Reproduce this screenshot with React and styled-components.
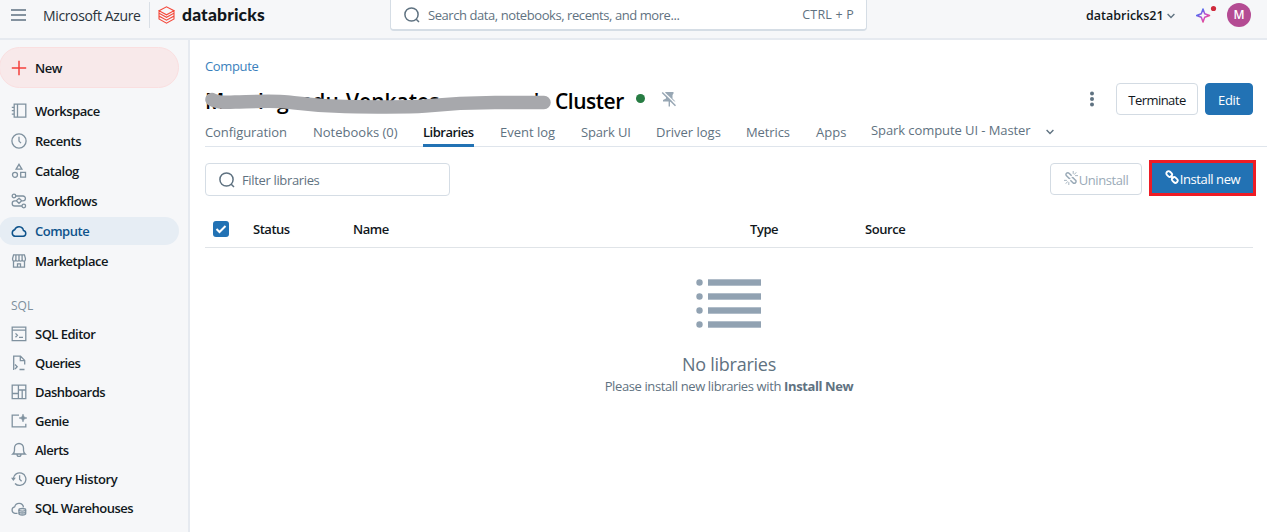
import React from 'react';
import styled, { createGlobalStyle, css } from 'styled-components';

const Global = createGlobalStyle`
  * { box-sizing: border-box; }
  body { margin: 0; background: #fff; overflow: hidden; }
`;

const c = {
  ink: '#11171c',
  muted: '#5f7281',
  icon: '#7f919f',
  line: '#dfe5ec',
  bar: '#f6f7f9',
  blue: '#2272b4',
};

const Page = styled.div`
  width: 1267px;
  height: 532px;
  display: flex;
  flex-direction: column;
  overflow: hidden;
  font-family: 'Open Sans', 'Noto Sans', sans-serif;
  font-size: 13px;
  line-height: 20px;
  color: ${c.ink};
  white-space: nowrap;
`;

const Text = styled.span`
  letter-spacing: ${(p) => p.$ls || 0}px;
`;

/* ---------- top bar ---------- */
const TopBar = styled.header`
  flex: none;
  height: 40px;
  padding-bottom: 8px;
  display: flex;
  align-items: center;
  background: ${c.bar};
  border-bottom: 2px solid #e6eaf0;
`;
const MenuButton = styled.div`
  width: 43px;
  padding-left: 11px;
  display: flex;
`;
const Azure = styled.div`
  width: 106px;
  padding-top: 1px;
  font-size: 14px;
  color: #2a333b;
`;
const Brand = styled.div`
  height: 26px;
  width: 241px;
  padding: 0 0 0 8px;
  border-left: 1px solid #d9dfe6;
  display: flex;
  align-items: center;
  gap: 7px;
  font-family: Lato, 'Open Sans', sans-serif;
  font-weight: 900;
  font-size: 17.5px;
`;
const GlobalSearch = styled.div`
  width: 477px;
  height: 34px;
  margin-top: -2px;
  padding: 2px 12px 0 13px;
  display: flex;
  align-items: center;
  background: #fff;
  border: 1px solid #d5dde5;
  border-bottom-width: 2px;
  border-radius: 4px;
  color: ${c.muted};
  svg { margin-right: 8px; }
  span:last-child { margin-left: auto; font-size: 12.5px; padding-top: 1px; }
`;
const Account = styled.div`
  width: 110px;
  margin-left: 219px;
  padding-top: 1px;
  display: flex;
  align-items: center;
  gap: 3px;
  font-weight: 600;
  font-size: 12.5px;
`;
const Avatar = styled.div`
  width: 24px;
  height: 24px;
  margin-left: 9px;
  border-radius: 50%;
  background: #b44b93;
  color: #fff;
  font-weight: 600;
  font-size: 12px;
  line-height: 24px;
  text-align: center;
`;

/* ---------- sidebar ---------- */
const Body = styled.div`
  flex: 1;
  min-height: 0;
  display: flex;
`;
const Sidebar = styled.nav`
  flex: none;
  width: 190px;
  padding-top: 7px;
  background: ${c.bar};
  border-right: 2px solid #e6eaf0;
  overflow: hidden;
`;
const NavItem = styled.div`
  display: flex;
  align-items: center;
  gap: 8px;
  width: 180px;
  height: ${(p) => p.$h || 30}px;
  margin-left: -1px;
  padding-left: 12px;
  font-weight: 600;
  color: ${c.ink};
  svg { color: ${c.icon}; flex: none; }
  ${(p) => p.$active && css`
    height: 28px;
    margin-top: 1px;
    margin-bottom: 1px;
    border-radius: 14px;
    background: #e6edf4;
    color: #0e538b;
    svg { color: #0e538b; }
  `}
  ${(p) => p.$primary && css`
    height: 41px;
    margin-bottom: 8px;
    border-radius: 21px;
    background: #f8e9ea;
    border: 1px solid #fadfe0;
    padding-left: 11px;
    svg { color: #f4403c; }
  `}
`;
const SectionLabel = styled.div`
  height: 44px;
  padding: 20px 0 0 11px;
  font-size: 12px;
  color: #7e909e;
`;

/* ---------- main ---------- */
const Main = styled.main`
  flex: 1;
  min-width: 0;
  padding-left: 15px;
  display: flex;
  flex-direction: column;
`;
const Crumb = styled.div`
  padding-top: 16px;
  height: 43px;
  color: #3a7fbc;
`;
const TitleRow = styled.div`
  height: 32px;
  padding-right: 14px;
  display: flex;
  align-items: center;
`;
const Title = styled.h1`
  position: relative;
  width: 419px;
  margin: 3px 13px 0 0;
  display: flex;
  font-size: 21px;
  line-height: 32px;
  font-weight: 600;
  color: #000;
`;
const Part = styled.span`
  width: ${(p) => p.$w}px;
  letter-spacing: ${(p) => p.$ls || 0}px;
`;
const Marker = styled.svg`
  position: absolute;
  left: 0;
  top: 7px;
`;
const Dot = styled.span`
  width: 9px;
  height: 9px;
  margin: 0 16px 1px -1px;
  border-radius: 50%;
  background: #277c43;
`;
const Kebab = styled.div`
  margin-left: auto;
  margin-right: 21px;
  display: flex;
`;
const ButtonPair = styled.div`
  display: flex;
  gap: 7px;
`;
const Button = styled.button`
  height: 32px;
  width: ${(p) => p.$w}px;
  padding: 2px 0 0;
  display: flex;
  align-items: center;
  justify-content: center;
  font: inherit;
  border-radius: 4px;
  border: 1px solid #d3dbe3;
  background: #fff;
  color: ${c.ink};
  ${(p) => p.$primary && css`
    background: ${c.blue};
    border-color: ${c.blue};
    color: #fff;
  `}
  ${(p) => p.$disabled && css`
    color: #9aaab7;
  `}
  ${(p) => p.$marked && css`
    height: 36px;
    padding-top: 2px;
    border: 3px solid #ee1c25;
    border-radius: 0;
  `}
  svg { margin: 0 1px 4px 0; }
`;
const Tabs = styled.div`
  height: 32px;
  padding-top: 7px;
  display: grid;
  grid-template-columns: 108px 110px 77px 81px 75px 90px 70px 55px 175px 20px;
  border-bottom: 1px solid ${c.line};
  color: ${c.muted};
  font-weight: 500;
`;
const Tab = styled.div`
  margin-top: ${(p) => (p.$raised ? -2 : 0)}px;
  height: 25px;
  justify-self: start;
  ${(p) => p.$active && css`
    color: ${c.ink};
    font-weight: 600;
    border-bottom: 3px solid ${c.blue};
  `}
`;
const Toolbar = styled.div`
  display: flex;
  height: 49px;
  padding: 13px 11px 0 0;
`;
const Filter = styled.div`
  width: 245px;
  height: 33px;
  margin: 3px auto 0 0;
  padding-left: 13px;
  display: flex;
  align-items: center;
  gap: 7px;
  border: 1px solid #d5dde5;
  border-radius: 4px;
  color: ${c.muted};
`;
const Actions = styled.div`
  display: flex;
  gap: 7px;
  button:first-child { margin-top: 3px; }
`;
const TableHead = styled.div`
  height: 52px;
  margin-right: 14px;
  padding: 15px 0 0 8px;
  display: grid;
  grid-template-columns: 40px 100px 397px 115px 1fr;
  align-items: center;
  border-bottom: 1px solid #e0e4e8;
  font-weight: 600;
  color: ${c.ink};
`;
const Check = styled.span`
  width: 16px;
  height: 16px;
  display: flex;
  align-items: center;
  justify-content: center;
  background: ${c.blue};
  border-radius: 3px;
`;
const Empty = styled.div`
  margin-right: 14px;
  padding-top: 31px;
  display: flex;
  flex-direction: column;
  align-items: center;
  color: ${c.muted};
`;
const EmptyTitle = styled.div`
  margin-top: 23px;
  font-size: 18px;
  line-height: 24px;
  font-weight: 500;
`;

/* ---------- icons ---------- */
const Icon = ({ children, size = 16, sw = 1.3, ...rest }) => (
  <svg width={size} height={size} viewBox="0 0 16 16" fill="none" stroke="currentColor" strokeWidth={sw} {...rest}>
    {children}
  </svg>
);
const icons = {
  plus: <path d="M8 .8v14.4M.8 8h14.4" strokeWidth="1.5" />,
  workspace: <path d="M3.2 1.2h11.6v13H3.2zM6.5 1.2v13M.8 4.3h2.4M.8 7.7h2.4M.8 11.1h2.4" />,
  recents: <><circle cx="8" cy="8" r="7.1" /><path d="M8 3.8v4.3l2 2" /></>,
  catalog: <><path d="M8 1.3l2.9 4.8H5.1z" /><circle cx="4" cy="11.8" r="2.5" /><path d="M9.7 9.4h4.8v4.8H9.7z" /></>,
  workflows: <><circle cx="3" cy="3" r="1.8" /><circle cx="12.8" cy="13" r="1.8" /><path d="M4.8 3h7.2a2.3 2.3 0 0 1 0 4.8h-1.3M5.3 7.8H3.8a2.6 2.6 0 0 0 0 5.2h7.2M8 5.3l2.7 2.5L8 10.300 5.300 7.800z" /></>,
  compute: <path d="M4 13.300a3.400 3.400 0 0 1-.300-6.600 4.500 4.500 0 0 1 8.700.700 3 3 0 0 1-.200 5.900z" strokeWidth="1.500" />,
  marketplace: <path d="M2.500 8.500v5.700h11V8.500M2.600 1.800h10.800l1 3.600v1.200a1.500 1.500 0 0 1-3.200 0 1.500 1.500 0 0 1-3.200 0 1.500 1.500 0 0 1-3.200 0 1.500 1.500 0 0 1-3.200 0V5.400zM4.900 6.500V2M8 6.500V2M11.100 6.500V2M6.500 14v-3.200h3V14" />,
  editor: <path d="M1.200 1.200h13.600v13.400H1.200zM1.200 4.200h13.600M4.500 7.400l1.900 1.900-1.900 1.900M8 11.300h4" />,
  queries: <path d="M2.700 15V1.200h6.800l4.200 4.200v4.100M9.300 1.200v4.400h4.400M4 9.500l2.200 2.200L4 14M8.500 14.500h5" />,
  dashboards: <path d="M1.200 1.200h13.600v13.400H1.200zM7.400 1.200v13.400M1.200 9.500h6.200M7.400 6h7.400M11.200 6v8.600" />,
  genie: <><path d="M8 2.200H1.200v11.600h13.600v-3" /><path d="M12 1l1.100 2.900L16 5l-2.900 1.100L12 9l-1.100-2.900L8 5l2.900-1.100z" fill="currentColor" strokeWidth=".5" /></>,
  alerts: <path d="M1.800 12h12.400c-1.200-1-1.700-2-1.700-3.800V6a4.500 4.500 0 0 0-9 0v2.200C3.500 10 3 11 1.800 12zM6 12.200a2 2.200 0 0 0 4 0" />,
  history: <><path d="M2.300 7.600A6.300 6.300 0 1 1 4 12.500M8.600 4.300v4l2 1.900" /><path d="M0 6.800h4.800L2.400 10z" fill="currentColor" stroke="none" /></>,
  warehouses: <><path d="M6.500 13.300H4a3.300 3.300 0 0 1-.300-6.500 4.500 4.500 0 0 1 8.800.500" /><ellipse cx="11.300" cy="9.800" rx="3.400" ry="1.300" /><path d="M7.900 9.800v3.700c0 2 6.800 2 6.800 0V9.800M7.900 11.800c0 1.600 6.800 1.600 6.800 0" /></>,
};

const primaryNav = [
  ['workspace', 'Workspace'],
  ['recents', 'Recents'],
  ['catalog', 'Catalog'],
  ['workflows', 'Workflows'],
  ['compute', 'Compute'],
  ['marketplace', 'Marketplace'],
];
const sqlNav = [
  ['editor', 'SQL Editor'],
  ['queries', 'Queries'],
  ['dashboards', 'Dashboards'],
  ['genie', 'Genie'],
  ['alerts', 'Alerts'],
  ['history', 'Query History'],
  ['warehouses', 'SQL Warehouses'],
];

const SearchIcon = () => (
  <Icon size={16} sw={1.5}><circle cx="7.500" cy="7.500" r="6.600" /><path d="M12 12l3 3" /></Icon>
);
const Chevron = () => (
  <svg width="8" height="6" viewBox="0 0 8 6" fill="none" stroke={c.muted} strokeWidth="1.400"><path d="M.6 1L4 4.400 7.400 1" /></svg>
);
const LinkIcon = () => (
  <Icon size={14} sw={2.1}>
    <rect x="1.300" y="2.100" width="7" height="5" rx="2.300" transform="rotate(45 4.800 4.600)" />
    <rect x="7.700" y="8.900" width="7" height="5" rx="2.300" transform="rotate(45 11.200 11.400)" />
    <path d="M6.300 6.300l3.400 3.400" />
  </Icon>
);
const UnlinkIcon = () => (
  <Icon size={14} sw={1.7}>
    <path d="M8.700 5.500L5.800 2.600a1.900 1.900 0 0 0-2.900 0 1.900 1.900 0 0 0 0 2.900l2.900 2.900 1.400.300" />
    <path d="M7.300 10.500l2.900 2.900a1.900 1.900 0 0 0 2.900 0 1.900 1.900 0 0 0 0-2.900l-2.900-2.900-1.400-.300" />
    <path d="M10.500 0v3.300M14 1.500l-2.300 2.600M16 5.300h-3.300M5.500 16v-3.300M2 14.500l2.300-2.600M0 10.700h3.300" strokeWidth="1" />
  </Icon>
);

export default function App() {
  return (
    <Page>
      <Global />
      <TopBar>
        <MenuButton>
          <svg width="15" height="12" stroke={c.muted} strokeWidth="1.400"><path d="M0 1h15M0 6h15M0 11h15" /></svg>
        </MenuButton>
        <Azure><Text $ls={-0.36}>Microsoft Azure</Text></Azure>
        <Brand>
          <svg width="17" height="18" viewBox="0 0 17 18" fill="none" stroke="#f4493b" strokeWidth="1.100">
            <path d="M1 4.700L8.500.800 16 4.700 8.500 8.800zM1 4.700v2.500l7.500 4.100L16 7.200V4.900M1 7.200v2.900l7.500 4.100 7.500-4.100V7.200M1 10.100V13l7.500 4.200L16 13v-2.900" />
          </svg>
          <Text $ls={0.15}>databricks</Text>
        </Brand>
        <GlobalSearch>
          <SearchIcon />
          <Text $ls={-0.43}>Search data, notebooks, recents, and more...</Text>
          <Text $ls={0.2}>CTRL + P</Text>
        </GlobalSearch>
        <Account><Text>databricks21</Text><Chevron /></Account>
        <svg width="22" height="20" viewBox="0 0 22 20" fill="none">
          <defs><linearGradient id="spark" x1="0" y1="0" x2="1" y2="1"><stop offset=".2" stopColor="#4a6df0" /><stop offset=".6" stopColor="#d04bc8" /><stop offset="1" stopColor="#f0504a" /></linearGradient></defs>
          <path d="M7 4l1.700 4.700L13.500 10.500 8.700 12.300 7 17l-1.700-4.700L.7 10.500l4.600-1.800z" stroke="url(#spark)" strokeWidth="1.500" strokeLinejoin="round" />
          <circle cx="17.500" cy="3.500" r="2.600" fill="#cf2a3c" />
        </svg>
        <Avatar>M</Avatar>
      </TopBar>
      <Body>
        <Sidebar>
          <NavItem $primary><Icon>{icons.plus}</Icon><Text $ls={-0.5}>New</Text></NavItem>
          {primaryNav.map(([k, t]) => (
            <NavItem key={k} $active={k === 'compute'}><Icon>{icons[k]}</Icon><Text $ls={-0.49}>{t}</Text></NavItem>
          ))}
          <SectionLabel>SQL</SectionLabel>
          {sqlNav.map(([k, t]) => (
            <NavItem key={k} $h={28.9}><Icon>{icons[k]}</Icon><Text $ls={k === 'history' ? -0.38 : -0.52}>{t}</Text></NavItem>
          ))}
        </Sidebar>
        <Main>
          <Crumb><Text $ls={-0.35}>Compute</Text></Crumb>
          <TitleRow>
            <Title>
              <Part $w={53}>M</Part>
              <Part $w={19}>l</Part>
              <Part $w={22}>g</Part>
              <Part $w={47}>ndu</Part>
              <Part $w={188}>Venkates</Part>
              <Part $w={21}>'</Part>
              <Part $w={69} $ls={-0.5}>Cluster</Part>
              <Marker width="346" height="22" viewBox="0 0 346 22" fill="none">
                <path d="M7 7.500C13 11 22 10.500 30 10C50 9.500 70 8.500 82 10C95 11.500 110 14 140 14.500C170 15 200 15.500 220 14C240 12 260 10.500 290 10.500H339" stroke="#a7a8ac" strokeWidth="13.500" strokeLinecap="round" />
              </Marker>
            </Title>
            <Dot />
            <Icon size={16}>
              <path d="M4.500 1h8v1.500L11.500 4v3.500l3 3H9V15.500H7.600v-5H2V9l3-1.500V4L3.500 2.500z" fill="#98a7b4" stroke="none" />
              <path d="M2.500 1L16 14" stroke="#fff" strokeWidth="1.500" />
              <path d="M1.200 1.500L14.500 14.800" stroke="#98a7b4" strokeWidth="1.500" />
            </Icon>
            <Kebab><svg width="6" height="16" fill={c.muted}><circle cx="3" cy="2.500" r="2" /><circle cx="3" cy="8" r="2" /><circle cx="3" cy="13.500" r="2" /></svg></Kebab>
            <ButtonPair>
              <Button $w={82}><Text $ls={-0.55}>Terminate</Text></Button>
              <Button $w={48} $primary><Text $ls={-0.3}>Edit</Text></Button>
            </ButtonPair>
          </TitleRow>
          <Tabs>
            <Tab><Text $ls={-0.08}>Configuration</Text></Tab>
            <Tab><Text>Notebooks (0)</Text></Tab>
            <Tab $active><Text $ls={-0.5}>Libraries</Text></Tab>
            <Tab><Text>Event log</Text></Tab>
            <Tab><Text $ls={-0.15}>Spark UI</Text></Tab>
            <Tab><Text>Driver logs</Text></Tab>
            <Tab><Text $ls={-0.1}>Metrics</Text></Tab>
            <Tab><Text>Apps</Text></Tab>
            <Tab $raised><Text $ls={-0.08}>Spark compute UI - Master</Text></Tab>
            <Tab $raised><Chevron /></Tab>
          </Tabs>
          <Toolbar>
            <Filter><SearchIcon /><Text $ls={-0.35}>Filter libraries</Text></Filter>
            <Actions>
              <Button $w={92} $disabled>
                <UnlinkIcon />
                <Text $ls={-0.4}>Uninstall</Text>
              </Button>
              <Button $w={107} $primary $marked>
                <LinkIcon />
                <Text $ls={-0.4}>Install new</Text>
              </Button>
            </Actions>
          </Toolbar>
          <TableHead>
            <Check><svg width="12" height="10" viewBox="0 0 12 10" fill="none" stroke="#fff" strokeWidth="2"><path d="M1.500 5l3 3 6-6" /></svg></Check>
            <Text $ls={-0.48}>Status</Text><Text $ls={-0.5}>Name</Text><Text $ls={-0.45}>Type</Text><Text $ls={-0.45}>Source</Text>
          </TableHead>
          <Empty>
            <svg width="66" height="50" fill="#91a2b2">
              {[3.5, 17.5, 31.5, 45.5].map((y) => (
                <React.Fragment key={y}><circle cx="3.500" cy={y} r="3.200" /><rect x="12" y={y - 3.200} width="53" height="6.400" /></React.Fragment>
              ))}
            </svg>
            <EmptyTitle><Text $ls={-0.25}>No libraries</Text></EmptyTitle>
            <Text $ls={-0.38}>Please install new libraries with <b>Install New</b></Text>
          </Empty>
        </Main>
      </Body>
    </Page>
  );
}
